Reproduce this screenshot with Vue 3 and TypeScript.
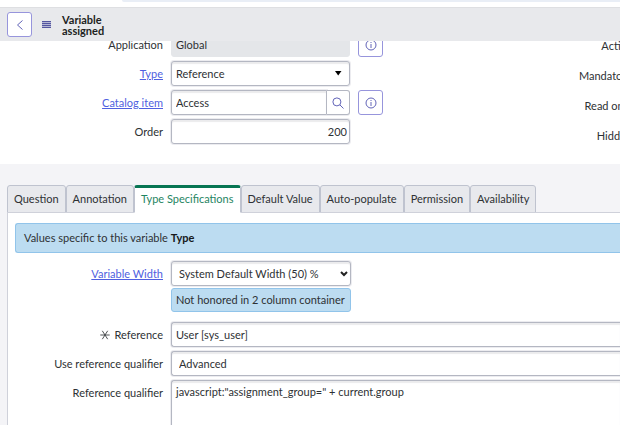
<script setup lang="ts">
import { ref } from 'vue'

const tabs: string[] = [
  'Question',
  'Annotation',
  'Type Specifications',
  'Default Value',
  'Auto-populate',
  'Permission',
  'Availability',
]
const flags: string[] = ['Active', 'Mandatory', 'Read only', 'Hidden']

const activeTab = ref('Type Specifications')
const application = ref('Global')
const type = ref('Reference')
const catalogItem = ref('Access')
const order = ref('200')
const width = ref('System Default Width (50) %')
const reference = ref('User [sys_user]')
const useQualifier = ref('Advanced')
const qualifier = ref('javascript:"assignment_group=" + current.group')
</script>

<template>
  <div class="page">
    <div class="browser-strip"><div class="address"></div></div>

    <header class="header">
      <button class="icon-button back" type="button" aria-label="Back">
        <svg width="8" height="12" viewBox="0 0 8 12"><path d="M6.5 1.5 1.5 6l5 4.5" /></svg>
      </button>
      <button class="menu" type="button" aria-label="Menu">
        <svg width="9" height="7" viewBox="0 0 9 7"><path class="gaps" d="M0 3.5h9" /><path d="M0 .5h9M0 2.5h9M0 4.5h9M0 6.5h9" /></svg>
      </button>
      <h1 class="title">Variable<br />assigned</h1>
    </header>

    <main class="content">
      <section class="record">
        <div class="fields">
          <div class="row">
            <label class="label" for="application">Application</label>
            <input id="application" v-model="application" class="control readonly" readonly />
            <button class="icon-button info" type="button" aria-label="Application details">
              <svg width="12" height="12" viewBox="0 0 12 12"><circle cx="6" cy="6" r="5" /><path d="M6 5v4M6 3v1" /></svg>
            </button>
          </div>
          <div class="row">
            <label class="label" for="type"><a href="#type">Type</a></label>
            <div class="select-box">
              <select id="type" v-model="type" class="control">
                <option>Reference</option>
              </select>
              <svg class="caret" width="8" height="5" viewBox="0 0 8 5"><path d="M1 0h6.5L4.2 4.5z" /></svg>
            </div>
          </div>
          <div class="row">
            <label class="label" for="catalog"><a href="#catalog">Catalog item</a></label>
            <div class="lookup">
              <input id="catalog" v-model="catalogItem" class="control" />
              <button class="search" type="button" aria-label="Look up catalog item">
                <svg width="12" height="12" viewBox="0 0 12 12"><circle cx="4.9" cy="4.9" r="4" /><path d="m7.8 7.8 3.7 3.7" /></svg>
              </button>
            </div>
            <button class="icon-button info" type="button" aria-label="Catalog item details">
              <svg width="12" height="12" viewBox="0 0 12 12"><circle cx="6" cy="6" r="5" /><path d="M6 5v4M6 3v1" /></svg>
            </button>
          </div>
          <div class="row">
            <label class="label" for="order">Order</label>
            <input id="order" v-model="order" class="control number" />
          </div>
        </div>
        <div class="flags">
          <span v-for="flag in flags" :key="flag" class="flag">{{ flag }}</span>
        </div>
      </section>

      <section class="related">
        <nav class="tabs" role="tablist">
          <button
            v-for="tab in tabs"
            :key="tab"
            class="tab"
            :class="{ active: tab === activeTab }"
            type="button"
            role="tab"
            :aria-selected="tab === activeTab"
            @click="activeTab = tab"
          >
            {{ tab }}
          </button>
        </nav>
        <div class="panel">
          <p class="banner">Values specific to this variable <b>Type</b></p>
          <div class="panel-fields">
            <div class="row width-row">
              <label class="label" for="width"><a href="#width">Variable Width</a></label>
              <div class="stack">
                <div class="select-box">
                  <select id="width" v-model="width" class="control indented">
                    <option>System Default Width (50) %</option>
                  </select>
                  <svg class="chevron" width="8" height="6" viewBox="0 0 8 6"><path d="m1 1 3 3 3-3" /></svg>
                </div>
                <p class="note">Not honored in 2 column container</p>
              </div>
            </div>
            <div class="row wide">
              <label class="label" for="reference">
                <svg class="required" width="10" height="10" viewBox="0 0 10 10"><path d="M.3 5h9.4M2.3.8l5.4 8.4M7.7.8 2.3 9.2" /></svg>
                Reference
              </label>
              <input id="reference" v-model="reference" class="control" />
            </div>
            <div class="row wide">
              <label class="label" for="use-qualifier">Use reference qualifier</label>
              <select id="use-qualifier" v-model="useQualifier" class="control indented">
                <option>Advanced</option>
              </select>
            </div>
            <div class="row wide">
              <label class="label" for="qualifier">Reference qualifier</label>
              <textarea id="qualifier" v-model="qualifier" class="control area"></textarea>
            </div>
          </div>
        </div>
      </section>
    </main>
  </div>
</template>

<style>
body {
  overflow: hidden;
}
</style>

<style scoped>
.page {
  display: flex;
  flex-direction: column;
  height: 100vh;
  overflow: hidden;
  background: #fff;
  color: #2e3134;
  font: 11px/16px Lato, "Liberation Sans", sans-serif;
}
.page * {
  box-sizing: border-box;
}
button,
input,
select,
textarea {
  margin: 0;
  font: inherit;
  color: inherit;
}
svg {
  display: block;
  fill: none;
  stroke: #6264b8;
}
a {
  color: #4f5fe0;
  text-decoration: underline;
}
.browser-strip {
  flex: none;
  height: 7px;
  padding-left: 122px;
}
.address {
  height: 2px;
  background: #e9eef6;
  border-bottom-left-radius: 4px;
}
.header {
  display: flex;
  flex: none;
  align-items: center;
  height: 34px;
  padding-left: 7px;
  background: #e8e9ec;
  border-top: 1px solid #dedfe2;
}
.icon-button {
  display: grid;
  place-items: center;
  flex: none;
  width: 25px;
  height: 25px;
  padding: 0;
  background: #fff;
  border: 1px solid #9795dc;
  border-radius: 3px;
}
.menu {
  margin-left: 10px;
  padding: 0;
  background: none;
  border: 0;
}
.menu svg {
  stroke: #5456a0;
  shape-rendering: crispEdges;
}
.menu .gaps {
  stroke: #b4b5d3;
  stroke-width: 7;
}
.title {
  margin: 0 0 0 11px;
  font-size: 11px;
  line-height: 11px;
  font-weight: 700;
  color: #1d1f22;
}
.content {
  flex: 1;
  display: flex;
  flex-direction: column;
  min-height: 0;
  overflow: hidden;
}
.record {
  display: flex;
  flex: none;
  justify-content: space-between;
  margin-top: -9px;
  padding-bottom: 20px;
}
.fields {
  display: flex;
  flex-direction: column;
  gap: 4px;
}
.row {
  display: grid;
  grid-template-columns: 163px 179px 25px;
  column-gap: 8px;
}
.label {
  display: flex;
  justify-content: flex-end;
  align-items: center;
  gap: 5px;
  height: 25px;
  white-space: nowrap;
}
.control {
  display: block;
  width: 100%;
  height: 25px;
  padding: 0 4px;
  appearance: none;
  background: #fff;
  border: 1px solid #b4b7c2;
  border-radius: 3px;
  box-shadow: inset 0 2px 1px #ebebed, 0 0 0 1px #ececf0;
  outline: 0;
}
.readonly {
  background: #e4e6e9;
  border-color: #e4e6e9;
  box-shadow: none;
}
.number {
  padding-right: 2px;
  text-align: right;
}
.select-box {
  position: relative;
}
.caret,
.chevron {
  position: absolute;
  top: 10px;
  right: 8px;
  pointer-events: none;
}
.caret {
  fill: #000;
  stroke: none;
}
.chevron {
  right: 3px;
  stroke: #222;
  stroke-width: 2;
}
.lookup {
  display: flex;
}
.lookup .control {
  flex: 1;
  min-width: 0;
  border-radius: 3px 0 0 3px;
}
.search {
  display: grid;
  place-items: center;
  width: 23px;
  padding: 0;
  background: #fff;
  border: 1px solid #b4b7c2;
  border-left: 0;
  border-radius: 0 3px 3px 0;
  box-shadow: 0 1px 0 #ececf0;
}
.flags {
  display: flex;
  flex-direction: column;
  align-items: flex-end;
  gap: 14px;
  margin-right: -12px;
  padding-top: 6px;
}
.related {
  display: flex;
  flex: 1;
  flex-direction: column;
  padding: 21px 0 0 7px;
  background: #f4f4f7;
}
.tabs {
  display: flex;
  flex: none;
}
.tab {
  height: 28px;
  margin-bottom: -1px;
  padding: 0 6px;
  background: #e8e9ed;
  border: 1px solid #bfc3cf;
  border-radius: 3px 3px 0 0;
  white-space: nowrap;
}
.tab.active {
  position: relative;
  padding-bottom: 2px;
  color: #1f8562;
  background: #fff;
  border-top: 3px solid #087553;
  border-bottom-color: #fff;
}
.panel {
  flex: 1;
  padding: 10px 0 0 7px;
  background: #fff;
  border: solid #cfd1da;
  border-width: 1px 0 0 1px;
}
.banner,
.note {
  margin: 0;
  background: #bcdcf1;
  border: 1px solid #91c4ea;
  border-radius: 3px;
}
.banner {
  padding: 6px 8px;
  border-width: 1px 0 1px 1px;
  border-radius: 3px 0 0 3px;
}
.banner b {
  color: #17191b;
}
.panel-fields {
  display: flex;
  flex-direction: column;
  gap: 4px;
  padding-top: 8px;
}
.panel .row {
  grid-template-columns: 148px 180px;
}
.panel .wide {
  grid-template-columns: 148px 1fr;
}
.width-row {
  padding-bottom: 6px;
}
.stack {
  display: flex;
  flex-direction: column;
  gap: 2px;
}
.note {
  padding: 3px 4px;
  white-space: nowrap;
}
.indented {
  padding-left: 7px;
}
.wide .control {
  border-right: 0;
  border-radius: 3px 0 0 3px;
}
.required {
  stroke: #3b3e41;
  stroke-width: 0.9;
}
.area {
  height: 80px;
  padding-top: 3px;
  resize: none;
}
</style>
